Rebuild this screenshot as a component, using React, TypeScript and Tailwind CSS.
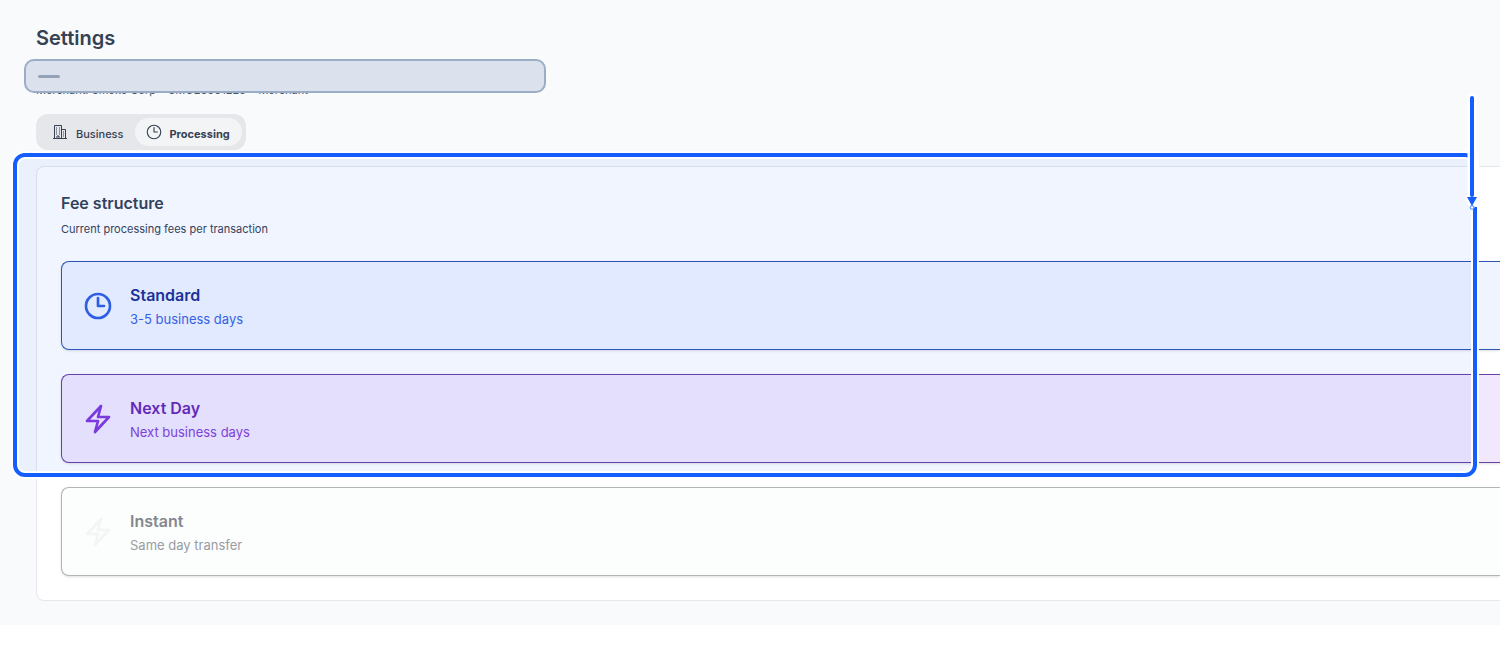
import type { ReactNode } from "react";
import clsx from "clsx";

interface IconProps {
  className?: string;
  strokeWidth?: number;
}

function BuildingIcon() {
  return (
    <svg viewBox="0 -2 18 18" className="h-[18px] w-[18px]" fill="none" stroke="currentColor" aria-hidden="true">
      <path d="M2.500 13.500V.5h7v13M9.500 4.500h4v9M1 13.500h14M5 13.500V11h2v2.500" />
      <path d="M4 3h1M7 3h1M4 5h1M7 5h1M4 7h1M7 7h1M4 9h1M7 9h1M11 7h1M11 9h1M11 11h1" />
    </svg>
  );
}

function ClockIcon({ className, strokeWidth = 2 }: IconProps) {
  return (
    <svg
      viewBox="0 0 24 24"
      className={className}
      fill="none"
      stroke="currentColor"
      strokeWidth={strokeWidth}
      strokeLinecap="round"
      strokeLinejoin="round"
      aria-hidden="true"
    >
      <path d="M12 6v6h4.500m4.500 0a9 9 0 1 1-18 0 9 9 0 0 1 18 0Z" />
    </svg>
  );
}

function BoltIcon({ className, strokeWidth = 2 }: IconProps) {
  return (
    <svg
      viewBox="0 0 24 24"
      className={className}
      fill="none"
      stroke="currentColor"
      strokeWidth={strokeWidth}
      strokeLinecap="round"
      strokeLinejoin="round"
      aria-hidden="true"
    >
      <path d="m3.750 13.500 10.500-11.250L12 10.500h8.250L9.750 21.750 12 13.500H3.750Z" />
    </svg>
  );
}

interface TabProps {
  label: string;
  icon: ReactNode;
  active?: boolean;
}

function Tab({ label, icon, active }: TabProps) {
  return (
    <button
      type="button"
      role="tab"
      aria-selected={!!active}
      className={clsx(
        "flex h-7 items-center gap-1.5 rounded-full pr-3 text-[11px] text-gray-700",
        active ? "bg-gray-100 pl-2.5 font-bold" : "pl-3 font-medium"
      )}
    >
      {icon}
      <span className="pt-1">{label}</span>
    </button>
  );
}

interface FeeCardProps {
  title: string;
  detail: string;
  icon: ReactNode;
  card: string;
  titleColor: string;
  detailColor: string;
}

function FeeCard({ title, detail, icon, card, titleColor, detailColor }: FeeCardProps) {
  return (
    <article className={clsx("flex h-[89px] items-center gap-4 rounded-l-lg border border-r-0 px-5 shadow-sm", card)}>
      {icon}
      <div className="pt-0.5">
        <h3 className={clsx("text-[16px] leading-6 font-semibold", titleColor)}>{title}</h3>
        <p className={clsx("text-[13px] leading-6", detailColor)}>{detail}</p>
      </div>
    </article>
  );
}

export default function App() {
  return (
    <div className="bg-white font-['Inter',sans-serif]">
      <main className="overflow-hidden bg-slate-50 pt-6 pb-6 pl-9">
        <header className="relative">
          <h1 className="text-[20px] leading-7 font-semibold text-gray-700">Settings</h1>
          <p className="mt-7 h-5 text-[11px] leading-5 text-gray-600">
            Merchant: Smoke Corp • SMO20001220 • Merchant
          </p>
          {/* Masked value */}
          <div className="absolute top-[35px] -left-3 flex h-[34px] w-[522px] items-center rounded-[10px] border-2 border-[#9badc4] bg-[#dbe2ed] px-3">
            <span className="h-[3px] w-[22px] rounded-full bg-[#94a3b8]"></span>
          </div>
        </header>

        <div role="tablist" className="mt-3.5 flex w-fit rounded-xl bg-gray-200 p-1">
          <Tab label="Business" icon={<BuildingIcon />} />
          <Tab label="Processing" icon={<ClockIcon className="h-[18px] w-[18px]" strokeWidth={1.5} />} active />
        </div>

        <div className="relative mt-4">
          <section className="rounded-l-lg border border-r-0 border-gray-200 bg-white pt-6 pb-6 pl-6">
            <h2 className="text-[16px] leading-6 font-semibold text-gray-700">Fee structure</h2>
            <p className="mt-1 text-[11px] leading-5 text-gray-700">Current processing fees per transaction</p>
            <div className="mt-[22px] flex flex-col gap-6">
              <FeeCard
                title="Standard"
                detail="3-5 business days"
                icon={<ClockIcon className="h-8 w-8 text-[#2f5fe3]" />}
                card="border-[#2f55b5] bg-[#f0f4ff]"
                titleColor="text-[#1d2f94]"
                detailColor="text-[#3763e2]"
              />
              <FeeCard
                title="Next Day"
                detail="Next business days"
                icon={<BoltIcon className="h-8 w-8 text-[#8139df]" />}
                card="border-[#6941a5] bg-[#f1e8fd]"
                titleColor="text-[#6928b4]"
                detailColor="text-[#853fd8]"
              />
              <FeeCard
                title="Instant"
                detail="Same day transfer"
                icon={<BoltIcon className="h-8 w-8 text-gray-100" />}
                card="border-[#b0b5b5] bg-[#fbfefd]"
                titleColor="text-[#85868d]"
                detailColor="text-[#9a9ba3]"
              />
            </div>
          </section>

          {/* Highlight frame */}
          <div className="pointer-events-none absolute -top-[13px] right-[23px] -left-[23px] h-[324px] rounded-xl border-4 border-[#155dfc] bg-[#155dfc]/6 shadow-[0_0_0_2px_white,inset_0_0_0_2px_white]"></div>

          {/* Pointer */}
          <svg
            viewBox="0 0 20 124"
            className="pointer-events-none absolute -top-[74px] right-[18px] h-[124px] w-5"
            aria-hidden="true"
          >
            <path d="M10 5V110" stroke="white" strokeWidth="9" strokeLinecap="round" />
            <path d="M13 60H17V115H13Z" fill="white" />
            <path d="M5 105H15L10 116Z" fill="white" stroke="white" strokeWidth="4" strokeLinejoin="round" />
            <path d="M10 6V103" stroke="#155dfc" strokeWidth="4" strokeLinecap="round" />
            <path d="M5 105H15L10 114Z" fill="#155dfc" />
            <circle cx="10" cy="115.500" r="1.800" fill="white" stroke="#155dfc" strokeWidth="0.800" />
          </svg>
        </div>
      </main>
    </div>
  );
}
